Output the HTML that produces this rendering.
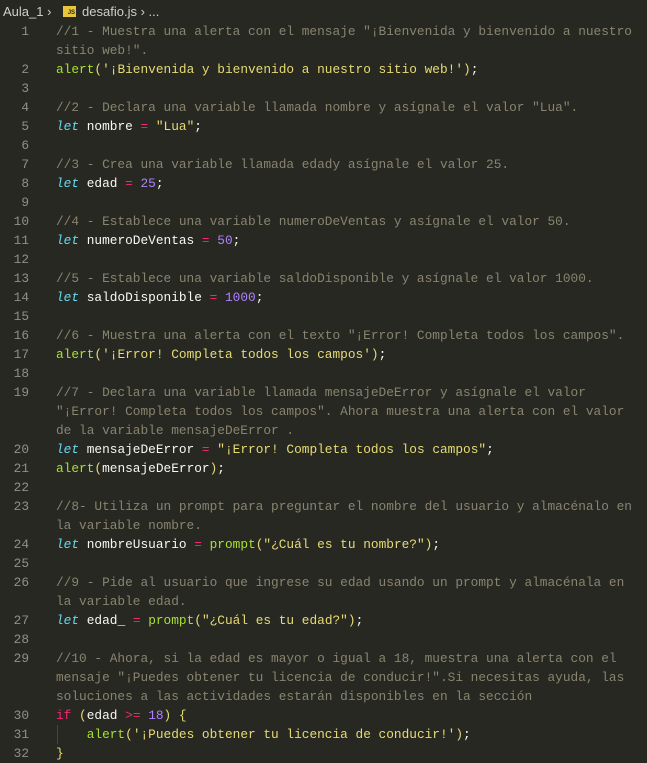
<!DOCTYPE html>
<html><head><meta charset="utf-8"><style>
body{margin:0;background:#272822;width:647px;height:760px;overflow:hidden}
.bc{height:22px;display:flex;align-items:center;font:13px "Liberation Sans",sans-serif;color:#cfcfc8;padding-left:3px;white-space:pre}
.js{display:inline-block;width:13px;height:11px;background:#e8c53a;color:#272822;font:bold 6px "Liberation Sans",sans-serif;text-align:right;line-height:14px;margin:0 6px 0 8px;padding-right:1px;box-sizing:border-box}
.ed{font:12.8px "Liberation Mono",monospace;color:#f8f8f2}
.r{height:19px;line-height:19px;white-space:pre;position:relative}
.n{position:absolute;left:0;width:29px;text-align:right;color:#90908a}
.t{position:absolute;left:56px}
.c{color:#88846f}.s{color:#e6db74}.f{color:#a6e22e}.k{color:#66d9ef;font-style:italic}.o{color:#f92672}.m{color:#ae81ff}.p{color:#e6db74}
.g{position:absolute;left:57px;top:0;width:1px;height:19px;background:#464741}
</style></head><body>
<div class="bc">Aula_1 › <span class="js">JS</span>desafio.js › ...</div>
<div class="ed">
<div class="r"><span class="n">1</span><span class="t c">//1 - Muestra una alerta con el mensaje "¡Bienvenida y bienvenido a nuestro</span></div>
<div class="r"><span class="t c">sitio web!".</span></div>
<div class="r"><span class="n">2</span><span class="t"><span class="f">alert</span><span class="p">(</span><span class="s">'¡Bienvenida y bienvenido a nuestro sitio web!'</span><span class="p">)</span>;</span></div>
<div class="r"><span class="n">3</span></div>
<div class="r"><span class="n">4</span><span class="t c">//2 - Declara una variable llamada nombre y asígnale el valor "Lua".</span></div>
<div class="r"><span class="n">5</span><span class="t"><span class="k">let</span> nombre <span class="o">=</span> <span class="s">"Lua"</span>;</span></div>
<div class="r"><span class="n">6</span></div>
<div class="r"><span class="n">7</span><span class="t c">//3 - Crea una variable llamada edady asígnale el valor 25.</span></div>
<div class="r"><span class="n">8</span><span class="t"><span class="k">let</span> edad <span class="o">=</span> <span class="m">25</span>;</span></div>
<div class="r"><span class="n">9</span></div>
<div class="r"><span class="n">10</span><span class="t c">//4 - Establece una variable numeroDeVentas y asígnale el valor 50.</span></div>
<div class="r"><span class="n">11</span><span class="t"><span class="k">let</span> numeroDeVentas <span class="o">=</span> <span class="m">50</span>;</span></div>
<div class="r"><span class="n">12</span></div>
<div class="r"><span class="n">13</span><span class="t c">//5 - Establece una variable saldoDisponible y asígnale el valor 1000.</span></div>
<div class="r"><span class="n">14</span><span class="t"><span class="k">let</span> saldoDisponible <span class="o">=</span> <span class="m">1000</span>;</span></div>
<div class="r"><span class="n">15</span></div>
<div class="r"><span class="n">16</span><span class="t c">//6 - Muestra una alerta con el texto "¡Error! Completa todos los campos".</span></div>
<div class="r"><span class="n">17</span><span class="t"><span class="f">alert</span><span class="p">(</span><span class="s">'¡Error! Completa todos los campos'</span><span class="p">)</span>;</span></div>
<div class="r"><span class="n">18</span></div>
<div class="r"><span class="n">19</span><span class="t c">//7 - Declara una variable llamada mensajeDeError y asígnale el valor</span></div>
<div class="r"><span class="t c">"¡Error! Completa todos los campos". Ahora muestra una alerta con el valor</span></div>
<div class="r"><span class="t c">de la variable mensajeDeError .</span></div>
<div class="r"><span class="n">20</span><span class="t"><span class="k">let</span> mensajeDeError <span class="o">=</span> <span class="s">"¡Error! Completa todos los campos"</span>;</span></div>
<div class="r"><span class="n">21</span><span class="t"><span class="f">alert</span><span class="p">(</span>mensajeDeError<span class="p">)</span>;</span></div>
<div class="r"><span class="n">22</span></div>
<div class="r"><span class="n">23</span><span class="t c">//8- Utiliza un prompt para preguntar el nombre del usuario y almacénalo en</span></div>
<div class="r"><span class="t c">la variable nombre.</span></div>
<div class="r"><span class="n">24</span><span class="t"><span class="k">let</span> nombreUsuario <span class="o">=</span> <span class="f">prompt</span><span class="p">(</span><span class="s">"¿Cuál es tu nombre?"</span><span class="p">)</span>;</span></div>
<div class="r"><span class="n">25</span></div>
<div class="r"><span class="n">26</span><span class="t c">//9 - Pide al usuario que ingrese su edad usando un prompt y almacénala en</span></div>
<div class="r"><span class="t c">la variable edad.</span></div>
<div class="r"><span class="n">27</span><span class="t"><span class="k">let</span> edad_ <span class="o">=</span> <span class="f">prompt</span><span class="p">(</span><span class="s">"¿Cuál es tu edad?"</span><span class="p">)</span>;</span></div>
<div class="r"><span class="n">28</span></div>
<div class="r"><span class="n">29</span><span class="t c">//10 - Ahora, si la edad es mayor o igual a 18, muestra una alerta con el</span></div>
<div class="r"><span class="t c">mensaje "¡Puedes obtener tu licencia de conducir!".Si necesitas ayuda, las</span></div>
<div class="r"><span class="t c">soluciones a las actividades estarán disponibles en la sección</span></div>
<div class="r"><span class="n">30</span><span class="t"><span class="o">if</span> <span class="p">(</span>edad <span class="o">&gt;=</span> <span class="m">18</span><span class="p">)</span> <span class="p">{</span></span></div>
<div class="r"><span class="n">31</span><span class="g"></span><span class="t">    <span class="f">alert</span><span class="p">(</span><span class="s">'¡Puedes obtener tu licencia de conducir!'</span><span class="p">)</span>;</span></div>
<div class="r"><span class="n">32</span><span class="t p">}</span></div>
</div>
</body></html>
